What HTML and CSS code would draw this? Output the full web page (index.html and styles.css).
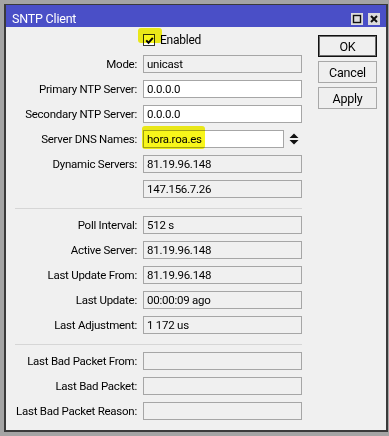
FILE: index.html
```html
<!DOCTYPE html>
<html lang="en">
<head>
    <meta charset="UTF-8">
    <title>SNTP Client</title>
    <link rel="stylesheet" href="styles.css">
</head>
<body>
    <div class="window">
        <div class="titlebar">
            <span class="title">SNTP Client</span>
            <span class="tb-btn">
                <svg width="12" height="12" viewBox="0 0 12 12"><rect x="2.5" y="2.5" width="7" height="7" fill="none" stroke="#111" stroke-width="1.4"/></svg>
            </span>
            <span class="tb-btn">
                <svg width="12" height="12" viewBox="0 0 12 12"><path d="M3 3 L9 9 M9 3 L3 9" stroke="#111" stroke-width="2"/></svg>
            </span>
        </div>

        <div class="content">
            <div class="form">
                <div class="enabled-row">
                    <span class="checkbox">
                        <svg width="9" height="9" viewBox="0 0 9 9"><path d="M1.2 4.4 L3.5 6.8 L7.8 1.8" fill="none" stroke="#000" stroke-width="2"/></svg>
                    </span>
                    <span>Enabled</span>
                </div>

                <div class="grid">
                    <div class="label">Mode:</div>
                    <div class="field">unicast</div>
                    <div class="label">Primary NTP Server:</div>
                    <div class="field edit">0.0.0.0</div>
                    <div class="label">Secondary NTP Server:</div>
                    <div class="field edit">0.0.0.0</div>
                    <div class="label">Server DNS Names:</div>
                    <div class="dns">
                        <div class="field edit">hora.roa.es</div>
                        <svg class="spin" width="10" height="12" viewBox="0 0 10 12"><path d="M0.5 5 L5 0.5 L9.5 5 Z M0.5 7 L5 11.5 L9.5 7 Z" fill="#111"/></svg>
                    </div>
                    <div class="label">Dynamic Servers:</div>
                    <div class="field">81.19.96.148</div>
                    <div class="label"></div>
                    <div class="field">147.156.7.26</div>
                </div>

                <div class="sep"></div>

                <div class="grid">
                    <div class="label">Poll Interval:</div>
                    <div class="field">512 s</div>
                    <div class="label">Active Server:</div>
                    <div class="field">81.19.96.148</div>
                    <div class="label">Last Update From:</div>
                    <div class="field">81.19.96.148</div>
                    <div class="label">Last Update:</div>
                    <div class="field">00:00:09 ago</div>
                    <div class="label">Last Adjustment:</div>
                    <div class="field">1 172 us</div>
                </div>

                <div class="sep"></div>

                <div class="grid">
                    <div class="label">Last Bad Packet From:</div>
                    <div class="field"></div>
                    <div class="label">Last Bad Packet:</div>
                    <div class="field"></div>
                    <div class="label">Last Bad Packet Reason:</div>
                    <div class="field"></div>
                </div>
            </div>

            <div class="buttons">
                <button class="btn default">OK</button>
                <button class="btn">Cancel</button>
                <button class="btn">Apply</button>
            </div>
        </div>

        <!-- highlighter marks drawn over the screenshot -->
        <span class="mark mark-enabled"></span>
        <span class="mark mark-dns"></span>
    </div>
</body>
</html>
```

FILE: styles.css
```css
body {
    margin: 0;
    background: #a4a4a4;
    font-family: Roboto, 'Liberation Sans', sans-serif;
    font-size: 11.5px;
    letter-spacing: -0.25px;
    color: #000;
}

.window {
    position: relative;
    box-sizing: border-box;
    width: 384px;
    height: 428px;
    margin: 4px 0 0 4px;
    border: 2px solid #3a3a3a;
    border-top-width: 1px;
    background: #f0f0f0;
}

.titlebar {
    height: 22px;
    display: flex;
    align-items: flex-start;
    background: #4a4fc7;
}

.title {
    flex: 1;
    margin: 7px 0 0 6px;
    color: #fff;
    font-size: 12.5px;
    line-height: 14px;
    letter-spacing: -0.2px;
}

.tb-btn {
    width: 12px;
    height: 12px;
    margin-top: 8px;
    margin-right: 5px;
    background: #dcdcdc;
}

.tb-btn:last-child {
    margin-right: 6px;
}

.tb-btn svg {
    display: block;
}

.content {
    display: flex;
}

.form {
    width: 296px;
    padding-top: 5px;
}

.enabled-row {
    height: 16px;
    margin: 0 0 7px 137px;
    display: flex;
    align-items: center;
    gap: 5px;
    font-size: 12px;
}

.checkbox {
    box-sizing: border-box;
    width: 12px;
    height: 12px;
    border: 1px solid #333;
    background: #fff;
    display: flex;
    align-items: center;
    justify-content: center;
}

.grid {
    display: grid;
    grid-template-columns: 131px 159px;
    grid-auto-rows: 18px;
    column-gap: 6px;
    row-gap: 7px;
}

.label {
    text-align: right;
    line-height: 18px;
    white-space: nowrap;
}

.field {
    box-sizing: border-box;
    height: 18px;
    padding: 0 3px;
    border: 1px solid #a6a6a6;
    background: #f0f0f0;
    line-height: 16px;
    white-space: nowrap;
    overflow: hidden;
}

.field.edit {
    background: #fff;
}

.dns {
    display: flex;
    align-items: center;
}

.dns .field {
    width: 141px;
}

.spin {
    margin-left: 5px;
}

.sep {
    width: 287px;
    height: 1px;
    margin: 10px 0 7px 9px;
    background: #d6d6d6;
}

.buttons {
    display: flex;
    flex-direction: column;
    gap: 4px;
    margin-left: 16px;
    padding-top: 8px;
}

.btn {
    box-sizing: border-box;
    width: 59px;
    height: 22px;
    padding: 0;
    border: 1px solid #a8a8a8;
    background: #efefef;
    color: #000;
    font-family: inherit;
    font-size: 12.5px;
    letter-spacing: -0.2px;
}

.btn.default {
    border-color: #111;
    box-shadow: inset 0 0 0 1px #6e6e6e;
}

.mark {
    position: absolute;
    background: #f8f61a;
    mix-blend-mode: multiply;
    border-radius: 3px;
}

.mark-enabled {
    left: 132px;
    top: 23px;
    width: 24px;
    height: 15px;
}

.mark-dns {
    left: 136px;
    top: 121px;
    width: 63px;
    height: 23px;
}
```
